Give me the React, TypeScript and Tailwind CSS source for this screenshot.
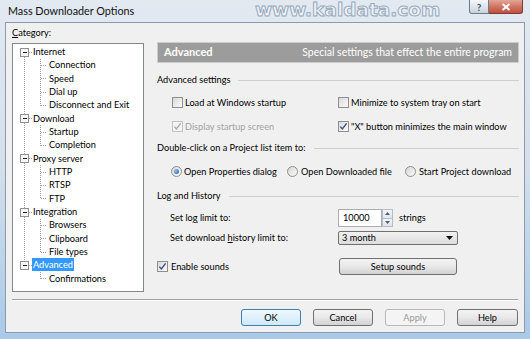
import React from 'react';

type Row = { t: string; l: number; sel?: boolean };

const rows: Row[] = [
  { t: 'Internet', l: 0 },
  { t: 'Connection', l: 1 },
  { t: 'Speed', l: 1 },
  { t: 'Dial up', l: 1 },
  { t: 'Disconnect and Exit', l: 1 },
  { t: 'Download', l: 0 },
  { t: 'Startup', l: 1 },
  { t: 'Completion', l: 1 },
  { t: 'Proxy server', l: 0 },
  { t: 'HTTP', l: 1 },
  { t: 'RTSP', l: 1 },
  { t: 'FTP', l: 1 },
  { t: 'Integration', l: 0 },
  { t: 'Browsers', l: 1 },
  { t: 'Clipboard', l: 1 },
  { t: 'File types', l: 1 },
  { t: 'Advanced', l: 0, sel: true },
  { t: 'Confirmations', l: 1 },
];

const RH = 13.33;
const cy = (i: number) => Math.round(1 + RH * i + RH / 2) + 0.5;

function TreeLines() {
  const roots = rows.map((r, i) => (r.l === 0 ? i : -1)).filter((i) => i >= 0);
  const groups: { p: number; last: number; kids: number[] }[] = [];
  roots.forEach((p, k) => {
    const end = k + 1 < roots.length ? roots[k + 1] : rows.length;
    const kids: number[] = [];
    for (let i = p + 1; i < end; i++) kids.push(i);
    if (kids.length) groups.push({ p, last: kids[kids.length - 1], kids });
  });
  const dot = { stroke: '#a0a0a0', strokeWidth: 1, strokeDasharray: '1 1' };
  return (
    <svg className="absolute left-0 top-0" width="130" height="247" shapeRendering="crispEdges">
      <line x1={11.5} y1={cy(0)} x2={11.5} y2={cy(16)} {...dot} />
      {roots.map((i) => (
        <line key={'rt' + i} x1={16} y1={cy(i)} x2={19} y2={cy(i)} {...dot} />
      ))}
      {groups.map((g) => (
        <g key={'g' + g.p}>
          <line x1={27.5} y1={cy(g.p) + 6} x2={27.5} y2={cy(g.last)} {...dot} />
          {g.kids.map((k) => (
            <line key={'k' + k} x1={28} y1={cy(k)} x2={34} y2={cy(k)} {...dot} />
          ))}
        </g>
      ))}
      {roots.map((i) => (
        <g key={'b' + i}>
          <rect x={7.5} y={cy(i) - 4} width={8} height={8} fill="#f7f7f7" stroke="#919191" />
          <line x1={9.5} y1={cy(i)} x2={14} y2={cy(i)} stroke="#1f1f1f" />
        </g>
      ))}
    </svg>
  );
}

function Check({ checked, disabled }: { checked?: boolean; disabled?: boolean }) {
  return (
    <span
      className={`flex h-[11px] w-[11px] shrink-0 items-center justify-center border ${
        disabled
          ? 'border-[#c2c2c2] bg-[#f4f4f4]'
          : 'border-[#8e8f8f] bg-gradient-to-br from-[#d9d9d9] to-[#fbfbfb]'
      }`}
    >
      {checked && (
        <svg width="9" height="9" viewBox="0 0 9 9">
          <path
            d="M1.3 4.6 L3.4 7 L7.6 1.4"
            fill="none"
            stroke={disabled ? '#a9a9a9' : '#3b4f86'}
            strokeWidth="1.4"
          />
        </svg>
      )}
    </span>
  );
}

function Radio({ on }: { on?: boolean }) {
  return (
    <span className="flex h-[11px] w-[11px] shrink-0 items-center justify-center rounded-full border border-[#8e8f8f] bg-gradient-to-br from-[#d6d6d6] to-[#fafafa]">
      {on && (
        <span className="h-[5px] w-[5px] rounded-full bg-[radial-gradient(circle_at_35%_35%,#8cc4f7,#1b56ad)]" />
      )}
    </span>
  );
}

function Btn({
  children,
  kind,
  className,
}: {
  children: React.ReactNode;
  kind?: 'def' | 'dis';
  className?: string;
}) {
  const look =
    kind === 'def'
      ? 'border-[#3c7fb1] bg-gradient-to-b from-[#eef7fd] to-[#cfe9f8]'
      : kind === 'dis'
      ? 'border-[#b5b9bc] bg-[#f4f4f4] text-[#9a9a9a]'
      : 'border-[#707070] bg-gradient-to-b from-[#f3f3f3] via-[#e8e8e8] to-[#d2d2d2]';
  return (
    <div className={`flex h-[17px] items-center justify-center rounded-[3px] border ${look} ${className ?? ''}`}>
      {children}
    </div>
  );
}

function Group({ title }: { title: string }) {
  return (
    <div className="flex h-[14px] items-center gap-[8px]">
      <span>{title}</span>
      <div className="h-px flex-1 bg-[#cfcfcf]" />
    </div>
  );
}

export default function App() {
  return (
    <div className="relative flex h-[339px] w-[530px] flex-col overflow-hidden bg-gradient-to-b from-[#e2e9f1] via-[#d3dfeb] to-[#a8c9e8] font-['Lato',sans-serif] text-[9.2px] text-black">
      {/* watermark */}
      <div className="pointer-events-none absolute left-[255px] top-[-1px] font-['DejaVu_Sans',sans-serif] text-[18.5px] font-bold leading-[22px] text-[#eef2f7] [-webkit-text-stroke:1px_#98a9bc]">
        www.kaldata.com
      </div>

      {/* title bar */}
      <div className="relative flex h-[22px] shrink-0 items-start justify-between">
        <div className="pl-[8px] pt-[4px] text-[10.8px] leading-[14px] text-[#111]">Mass Downloader Options</div>
        <div className="mr-[7px] flex h-[14px]">
          <div className="flex w-[20px] items-center justify-center rounded-bl-[3px] border border-t-0 border-[#6d7a8a] bg-gradient-to-b from-[#f4f7fa] to-[#c9d3de] text-[10px] font-bold leading-none text-[#3a4a5c]">
            ?
          </div>
          <div className="flex w-[34px] items-center justify-center rounded-br-[3px] border border-l-0 border-t-0 border-[#7a3b34] bg-gradient-to-b from-[#e4a597] via-[#cf7565] to-[#c0503e]">
            <svg width="10" height="8" viewBox="0 0 10 8">
              <path d="M1.5 1 L8.5 7 M8.5 1 L1.5 7" stroke="#fff" strokeWidth="2" />
            </svg>
          </div>
        </div>
      </div>

      {/* client area */}
      <div className="mx-[5px] flex h-[311px] flex-col border border-[#8d9aa9] bg-[#f0f0f0]">
        <div className="flex">
          {/* left column */}
          <div className="ml-[6px] flex w-[132px] flex-col">
            <div className="mt-[3px] h-[14px] leading-[14px]">
              <span className="underline underline-offset-[1px]">C</span>ategory:
            </div>
            <div className="relative mt-[3px] h-[249px] w-[132px] border border-[#828790] bg-white">
              <TreeLines />
              <div className="relative flex flex-col pt-[1px]">
                {rows.map((r) => (
                  <div
                    key={r.t}
                    className={`flex h-[13.33px] items-center ${r.l ? 'pl-[35px]' : 'pl-[19px]'}`}
                  >
                    <span
                      className={
                        r.sel
                          ? 'h-[13px] bg-[#3399ff] px-[1px] leading-[13px] text-white'
                          : 'px-[1px] leading-[13px]'
                      }
                    >
                      {r.t}
                    </span>
                  </div>
                ))}
              </div>
            </div>
          </div>

          {/* right panel */}
          <div className="ml-[13px] mt-[19px] flex w-[362px] flex-col">
            <div className="flex h-[21px] items-center justify-between border border-[#cdcdcd] bg-[#9c9c9c] px-[6px] text-white">
              <span className="text-[11px] font-bold">Advanced</span>
              <span className="text-[10.5px]">Special settings that effect the entire program</span>
            </div>

            <div className="mt-[10px]">
              <Group title="Advanced settings" />
            </div>

            <div className="mt-[8px] flex h-[16px] items-center pl-[15px]">
              <div className="flex w-[166px] items-center gap-[2px]">
                <Check />
                <span>Load at Windows startup</span>
              </div>
              <div className="flex items-center gap-[2px]">
                <Check />
                <span>Minimize to system tray on start</span>
              </div>
            </div>

            <div className="mt-[8px] flex h-[16px] items-center pl-[15px]">
              <div className="flex w-[166px] items-center gap-[2px]">
                <Check checked disabled />
                <span className="text-[#a3a3a3]">Display startup screen</span>
              </div>
              <div className="flex items-center gap-[2px]">
                <Check checked />
                <span>"X" button minimizes the main window</span>
              </div>
            </div>

            <div className="mt-[6px]">
              <Group title="Double-click on a Project list item to:" />
            </div>

            <div className="mt-[9px] flex h-[16px] items-center pl-[14px]">
              <div className="flex w-[116px] items-center gap-[2px]">
                <Radio on />
                <span>Open Properties dialog</span>
              </div>
              <div className="flex w-[118px] items-center gap-[3px]">
                <Radio />
                <span>Open Downloaded file</span>
              </div>
              <div className="flex items-center gap-[3px]">
                <Radio />
                <span>Start Project download</span>
              </div>
            </div>

            <div className="mt-[9px]">
              <Group title="Log and History" />
            </div>

            <div className="mt-[6px] flex h-[18px] items-center pl-[13px]">
              <div className="w-[168px]">
                Set lo<span className="underline underline-offset-[1px]">g</span> limit to:
              </div>
              <div className="flex h-[18px] w-[44px] items-center border border-[#abadb3] bg-white pl-[4px]">10000</div>
              <div className="flex h-[18px] w-[11px] flex-col">
                <div className="flex flex-1 items-center justify-center border border-b-0 border-[#b6bcc6] bg-gradient-to-b from-[#f2f5f9] to-[#dfe6ee]">
                  <svg width="5" height="3" viewBox="0 0 5 3">
                    <path d="M0 3 L2.5 0 L5 3 Z" fill="#4d5f7a" />
                  </svg>
                </div>
                <div className="flex flex-1 items-center justify-center border border-[#b6bcc6] bg-gradient-to-b from-[#f2f5f9] to-[#dfe6ee]">
                  <svg width="5" height="3" viewBox="0 0 5 3">
                    <path d="M0 0 L2.5 3 L5 0 Z" fill="#4d5f7a" />
                  </svg>
                </div>
              </div>
              <span className="ml-[6px]">strings</span>
            </div>

            <div className="mt-[4px] flex h-[14px] items-center pl-[13px]">
              <div className="w-[168px]">
                Set download <span className="underline underline-offset-[1px]">h</span>istory limit to:
              </div>
              <div className="flex h-[14px] w-[120px] items-center justify-between rounded-[2px] border border-[#707070] bg-gradient-to-b from-[#f2f2f2] to-[#dcdcdc] pl-[3px] pr-[4px]">
                <span>3 month</span>
                <svg width="7" height="4" viewBox="0 0 7 4">
                  <path d="M0 0 L7 0 L3.5 4 Z" fill="#111" />
                </svg>
              </div>
            </div>

            <div className="mt-[13px] flex h-[17px] items-center">
              <div className="flex w-[182px] items-center gap-[3px]">
                <Check checked />
                <span>Enable sounds</span>
              </div>
              <Btn className="w-[118px]">Setup sounds</Btn>
            </div>
          </div>
        </div>

        {/* separator */}
        <div className="ml-[6px] mr-[6px] mt-[7px] h-[2px] border-t border-b border-t-[#a0a0a0] border-b-white" />

        {/* buttons */}
        <div className="mt-[8px] flex justify-end gap-[12px] pr-[6px]">
          <Btn kind="def" className="w-[60px]">OK</Btn>
          <Btn className="w-[60px]">Cancel</Btn>
          <Btn kind="dis" className="w-[60px]">Apply</Btn>
          <Btn className="w-[61px]">Help</Btn>
        </div>
      </div>
    </div>
  );
}
